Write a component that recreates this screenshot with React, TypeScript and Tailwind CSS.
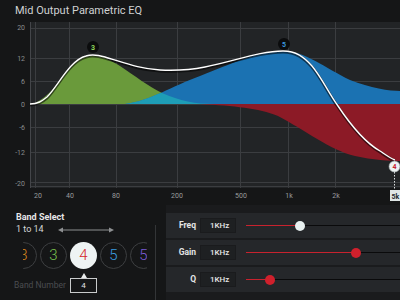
import React from 'react';

const GREEN = 'M30,104 C45,103 60,80 72,66 C80,58 86,56 93,56 C103,56 110,60 120,66 C135,76 148,86 162,93 C180,101 195,104 215,104 Z';
const BLUE = 'M125,104 C150,101 172,86 200,76 C230,64 260,51 283,51 C305,51 325,68 350,80 C370,88 390,91 400,91 L400,104 Z';
const RED = 'M200,104 C235,106 258,108 278,116 C305,130 330,150 355,156 C372,160 390,161 400,161 L400,104 Z';
const CURVE =
  'M30,104 C38,104 42,101 47,97 C58,86 70,60 86,56 C92,54 98,55 105,57 C125,63 140,69 160,70 C180,71 190,70 205,67 C235,61 260,51 283,51 C296,51 304,57 312,66 C322,78 328,92 338,106 C350,124 364,142 380,151 C386,155 390,158 395,160';

const yLabels = [
  { v: '20', y: 27 },
  { v: '12', y: 58 },
  { v: '6', y: 81 },
  { v: '0', y: 104 },
  { v: '-6', y: 127 },
  { v: '-12', y: 152 },
  { v: '-20', y: 183 },
];

const xLabels = [
  { v: '20', x: 38 },
  { v: '40', x: 70 },
  { v: '80', x: 116 },
  { v: '200', x: 177 },
  { v: '500', x: 241 },
  { v: '1k', x: 289 },
  { v: '2k', x: 336 },
];

const hLines = [28, 58, 81, 104, 127, 152, 182, 186];
const vLines = [35, 69, 116, 177, 240, 288, 335];

// EQ response graph
const Chart = () => (
  <svg width={400} height={183} viewBox="0 22 400 183" className="block">
    <defs>
      <clipPath id="plot">
        <rect x={30} y={22} width={370} height={166} />
      </clipPath>
      <clipPath id="greenClip">
        <path d={GREEN} />
      </clipPath>
    </defs>
    <rect x={30} y={22} width={370} height={166} fill="#222426" />
    {hLines.map(y => (
      <line key={y} x1={30} x2={400} y1={y + 0.5} y2={y + 0.5} stroke="#3b3d40" strokeWidth={1} />
    ))}
    <line x1={30.5} x2={30.5} y1={22} y2={188} stroke="#44464a" />
    {vLines.map(x => (
      <line key={x} x1={x + 0.5} x2={x + 0.5} y1={22} y2={188} stroke="#3b3d40" strokeWidth={1} />
    ))}
    <g clipPath="url(#plot)">
      <path d={GREEN} fill="#6a9a3b" />
      <path d={BLUE} fill="#1b72b2" />
      <g clipPath="url(#greenClip)">
        <path d={BLUE} fill="#1e9db6" />
      </g>
      <path d={RED} fill="#8c1a26" />
      <path d={CURVE} fill="none" stroke="#000" strokeOpacity={0.55} strokeWidth={3} transform="translate(0,1)" />
      <path d={CURVE} fill="none" stroke="#ffffff" strokeWidth={1.4} />
    </g>

    {/* band markers */}
    <circle cx={93} cy={47} r={6} fill="#0b0c0d" />
    <text x={93} y={49.5} textAnchor="middle" fontSize={7} fontWeight={700} fill="#8fd45a" fontFamily="Roboto, sans-serif">3</text>
    <circle cx={284} cy={44} r={6} fill="#0b0c0d" />
    <text x={284} y={46.5} textAnchor="middle" fontSize={7} fontWeight={700} fill="#3a98dc" fontFamily="Roboto, sans-serif">5</text>

    <line x1={394.5} x2={394.5} y1={172} y2={190} stroke="#d8dcdc" strokeDasharray="1.5 1.5" />
    <circle cx={394.5} cy={166.5} r={5.5} fill="#eef3f3" stroke="#9aa3a5" strokeWidth={0.6} />
    <text x={394.5} y={169} textAnchor="middle" fontSize={7} fontWeight={700} fill="#c62330" fontFamily="Roboto, sans-serif">4</text>
    <rect x={390} y={190} width={12} height={11} fill="#dfe6e6" />
    <text x={391.5} y={198.5} fontSize={7} fontWeight={700} fill="#1e2a30" fontFamily="Roboto, sans-serif">5k</text>

    {yLabels.map(l => (
      <text key={l.v} x={25} y={l.y + 2.5} textAnchor="end" fontSize={7} fill="#8a8c8e" fontFamily="Roboto, sans-serif">
        {l.v}
      </text>
    ))}
    {xLabels.map(l => (
      <text key={l.v} x={l.x} y={198} textAnchor="middle" fontSize={7} fill="#9a9c9e" fontFamily="Roboto, sans-serif">
        {l.v}
      </text>
    ))}
  </svg>
);

const bands = [
  { n: '3', color: 'text-[#d88a1e]' },
  { n: '3', color: 'text-[#7cc64e]' },
  { n: '4', color: 'text-[#d41f2b]', active: true },
  { n: '5', color: 'text-[#3a9be0]' },
  { n: '5', color: 'text-[#7b5bd6]' },
];

const BandSelect = () => (
  <div className="w-[155px] shrink-0 pl-[16px] pt-[7px]">
    <div className="text-[9px] leading-[11px] font-bold text-[#e6e7e8]">Band Select</div>
    <div className="flex items-center mt-[1px]">
      <span className="text-[9px] leading-[11px] text-[#d6d7d8]">1 to 14</span>
      <svg width={56} height={8} className="ml-[14px] mt-[1px]">
        <line x1={3} x2={53} y1={4} y2={4} stroke="#8e9092" strokeWidth={1} />
        <path d="M0,4 L5,1.5 L5,6.5 Z" fill="#8e9092" />
        <path d="M56,4 L51,1.5 L51,6.5 Z" fill="#8e9092" />
      </svg>
    </div>
    <div className="ml-[7px] w-[124px] overflow-hidden mt-[7px]">
      <div className="flex gap-[3px] -ml-[13px]">
        {bands.map((b, i) => (
          <div
            key={i}
            className={`w-[27px] h-[27px] shrink-0 rounded-full flex items-center justify-center text-[15px] font-light ${b.color} ${
              b.active ? 'bg-[#eef3f3]' : 'border border-[#3d3f41]'
            }`}
          >
            {b.n}
          </div>
        ))}
      </div>
    </div>
    <div className="flex justify-center w-[136px] -ml-[16px] mt-[4px]">
      <div className="ml-[32px] w-0 h-0 border-l-[3px] border-r-[3px] border-b-[5px] border-l-transparent border-r-transparent border-b-[#e8eaea]" />
    </div>
    <div className="flex items-center -ml-[2px]">
      <span className="text-[8.5px] text-[#4b4d50] w-[56px]">Band Number</span>
      <div className="w-[27px] h-[15px] border border-[#c9cbcc] flex items-center justify-center text-[8px] text-[#e0e1e2]">
        4
      </div>
    </div>
  </div>
);

const params = [
  { label: 'Freq', value: '1KHz', pct: 54, thumb: 'bg-[#e8f0f0]' },
  { label: 'Gain', value: '1KHz', pct: 110, thumb: 'bg-[#d0202c]' },
  { label: 'Q', value: '1KHz', pct: 24, thumb: 'bg-[#d0202c]' },
];

const ParamRow = ({ label, value, pct, thumb }: { label: string; value: string; pct: number; thumb: string }) => (
  <div className="h-[25px] bg-[#25272a] flex items-center">
    <div className="w-[30px] text-right text-[8.5px] font-bold text-[#e4e5e6]">{label}</div>
    <div className="ml-[4px] w-[36px] h-[15px] bg-[#1e2022] border border-[#1a1b1d] flex items-center pl-[9px] text-[8px] font-medium text-[#e4e5e6]">
      {value}
    </div>
    <div className="ml-[10px] flex-1 relative h-[10px] flex items-center">
      <div className="h-[1.5px] bg-[#c8222e]" style={{ width: pct }} />
      <div className="h-[1px] flex-1 bg-[#0a0a0b]" />
      <div className={`absolute top-[0px] w-[10px] h-[10px] rounded-full ${thumb}`} style={{ left: pct - 5 }} />
    </div>
  </div>
);

export default function App() {
  return (
    <div className="w-[400px] h-[300px] bg-[#151617] overflow-hidden font-['Roboto',sans-serif]">
      <div className="h-[22px] pl-[15px] pt-[4px] text-[11px] leading-[14px] text-[#cfd1d2]">
        Mid Output Parametric EQ
      </div>
      <Chart />
      <div className="flex h-[95px]">
        <BandSelect />
        <div className="w-px bg-[#333537] mt-[20px]" />
        <div className="flex-1 bg-[#1a1b1d] ml-[10px] pt-[8px] flex flex-col gap-[2px]">
          {params.map(p => (
            <ParamRow key={p.label} {...p} />
          ))}
        </div>
      </div>
    </div>
  );
}
